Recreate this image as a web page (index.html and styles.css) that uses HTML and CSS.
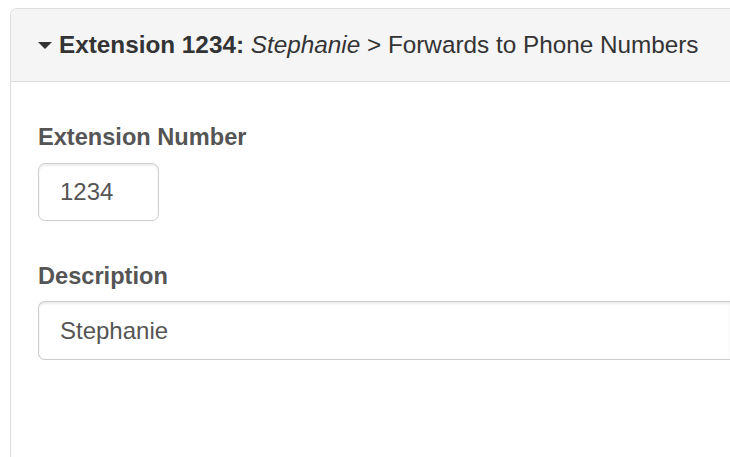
FILE: index.html
```html
<!DOCTYPE html>
<html>
<head>
<meta charset="utf-8">
<link rel="stylesheet" href="styles.css">
</head>
<body>
<div class="panel">
  <div class="panel-heading">
    <svg class="caret" width="14" height="7" viewBox="0 0 14 7"><polygon points="0,0 14,0 7,7" fill="#333"/></svg>
    <span class="title"><b>Extension 1234:</b> <i>Stephanie</i> &gt; Forwards to Phone Numbers</span>
  </div>
  <div class="panel-body">
    <div class="form-group">
      <label class="label">Extension Number</label>
      <input class="input input-short" type="text" value="1234">
    </div>
    <div class="form-group">
      <label class="label">Description</label>
      <input class="input input-wide" type="text" value="Stephanie">
    </div>
  </div>
</div>
</body>
</html>
```
FILE: styles.css
```css
html, body {
  margin: 0;
  padding: 0;
  background: #fff;
  overflow: hidden;
  width: 730px;
  height: 457px;
}
body {
  font-family: "Liberation Sans", Arial, Helvetica, sans-serif;
  color: #333;
}
.panel {
  box-sizing: border-box;
  margin: 8px 0 0 10px;
  width: 720px;
  height: 449px;
  border: 1px solid #ddd;
  border-right: none;
  border-bottom: none;
  border-radius: 7px 0 0 0;
  background: #fff;
  display: flex;
  flex-direction: column;
}
.panel-heading {
  background: #f5f5f5;
  border-bottom: 1px solid #ddd;
  border-radius: 6px 0 0 0;
  padding: 19px 0 19px 27px;
  height: 34px;
  display: flex;
  align-items: center;
  gap: 7px;
}
.caret {
  display: block;
  flex: none;
  margin-top: 1px;
}
.title {
  font-size: 24.3px;
  line-height: 34px;
  color: #333;
  white-space: nowrap;
}
.panel-body {
  padding: 38px 0 0 27px;
  display: flex;
  flex-direction: column;
  gap: 38px;
}
.form-group {
  display: flex;
  flex-direction: column;
  align-items: flex-start;
}
.label {
  font-size: 23.6px;
  line-height: 34px;
  font-weight: bold;
  color: #555;
  margin-bottom: 9px;
}
.input {
  box-sizing: border-box;
  height: 58px;
  margin: 0;
  border: 1px solid #ccc;
  border-radius: 7px;
  padding: 0 21px;
  font-family: "Liberation Sans", Arial, Helvetica, sans-serif;
  font-size: 24px;
  color: #555;
  background: #fff;
  box-shadow: inset 0 2px 2px rgba(0,0,0,0.075);
  outline: none;
}
.input-short {
  width: 121px;
}
.input-wide {
  align-self: stretch;
  height: 59px;
  margin-top: -1px;
  border-right: none;
  border-radius: 7px 0 0 7px;
}
```
